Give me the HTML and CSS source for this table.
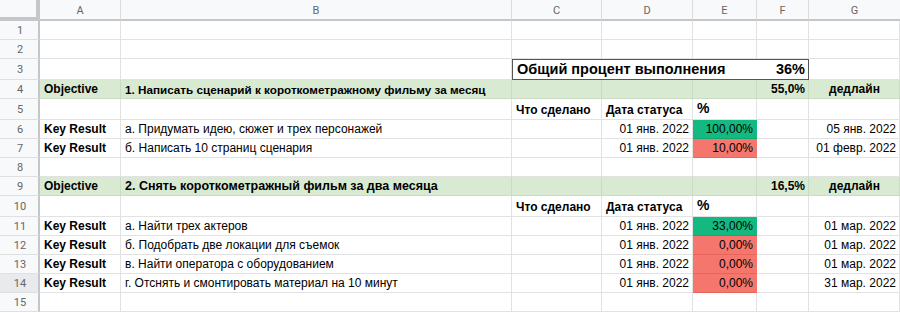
FILE: index.html
```html
<!DOCTYPE html>
<html lang="ru">
<head>
<meta charset="utf-8">
<title>OKR</title>
<link rel="stylesheet" href="styles.css">
</head>
<body>
<div class="sheet">
  <!-- header -->
  <div class="corner"></div>
  <div class="ch">A</div><div class="ch">B</div><div class="ch">C</div><div class="ch">D</div><div class="ch">E</div><div class="ch">F</div><div class="ch last">G</div>

  <!-- 1 -->
  <div class="rn">1</div><div class="c"></div><div class="c"></div><div class="c"></div><div class="c"></div><div class="c"></div><div class="c"></div><div class="c"></div>
  <!-- 2 -->
  <div class="rn">2</div><div class="c"></div><div class="c"></div><div class="c"></div><div class="c"></div><div class="c"></div><div class="c"></div><div class="c"></div>
  <!-- 3 -->
  <div class="rn">3</div><div class="c"></div><div class="c"></div>
  <div class="box"><span>Общий процент выполнения</span><span>36%</span></div>
  <div class="c"></div>
  <!-- 4 -->
  <div class="rn">4</div>
  <div class="c g b">Objective</div>
  <div class="c g b t-small">1. Написать сценарий к короткометражному фильму за месяц</div>
  <div class="c g"></div><div class="c g"></div><div class="c g"></div>
  <div class="c g b r">55,0%</div>
  <div class="c g b ctr">дедлайн</div>
  <!-- 5 -->
  <div class="rn">5</div><div class="c"></div><div class="c"></div>
  <div class="c b">Что сделано</div>
  <div class="c b">Дата статуса</div>
  <div class="c b big">%</div>
  <div class="c"></div><div class="c"></div>
  <!-- 6 -->
  <div class="rn">6</div>
  <div class="c b">Key Result</div>
  <div class="c">а. Придумать идею, сюжет и трех персонажей</div>
  <div class="c"></div>
  <div class="c r">01 янв. 2022</div>
  <div class="c r pg">100,00%</div>
  <div class="c"></div>
  <div class="c r">05 янв. 2022</div>
  <!-- 7 -->
  <div class="rn">7</div>
  <div class="c b">Key Result</div>
  <div class="c">б. Написать 10 страниц сценария</div>
  <div class="c"></div>
  <div class="c r">01 янв. 2022</div>
  <div class="c r pr">10,00%</div>
  <div class="c"></div>
  <div class="c r">01 февр. 2022</div>
  <!-- 8 -->
  <div class="rn">8</div><div class="c"></div><div class="c"></div><div class="c"></div><div class="c"></div><div class="c"></div><div class="c"></div><div class="c"></div>
  <!-- 9 -->
  <div class="rn">9</div>
  <div class="c g b">Objective</div>
  <div class="c g b t-large">2. Снять короткометражный фильм за два месяца</div>
  <div class="c g"></div><div class="c g"></div><div class="c g"></div>
  <div class="c g b r">16,5%</div>
  <div class="c g b ctr">дедлайн</div>
  <!-- 10 -->
  <div class="rn">10</div><div class="c"></div><div class="c"></div>
  <div class="c b">Что сделано</div>
  <div class="c b">Дата статуса</div>
  <div class="c b big">%</div>
  <div class="c"></div><div class="c"></div>
  <!-- 11 -->
  <div class="rn">11</div>
  <div class="c b">Key Result</div>
  <div class="c">а. Найти трех актеров</div>
  <div class="c"></div>
  <div class="c r">01 янв. 2022</div>
  <div class="c r pg">33,00%</div>
  <div class="c"></div>
  <div class="c r">01 мар. 2022</div>
  <!-- 12 -->
  <div class="rn">12</div>
  <div class="c b">Key Result</div>
  <div class="c">б. Подобрать две локации для съемок</div>
  <div class="c"></div>
  <div class="c r">01 янв. 2022</div>
  <div class="c r pr">0,00%</div>
  <div class="c"></div>
  <div class="c r">01 мар. 2022</div>
  <!-- 13 -->
  <div class="rn">13</div>
  <div class="c b">Key Result</div>
  <div class="c">в. Найти оператора с оборудованием</div>
  <div class="c"></div>
  <div class="c r">01 янв. 2022</div>
  <div class="c r pr">0,00%</div>
  <div class="c"></div>
  <div class="c r">01 мар. 2022</div>
  <!-- 14 -->
  <div class="rn sel">14</div>
  <div class="c b">Key Result</div>
  <div class="c">г. Отснять и смонтировать материал на 10 минут</div>
  <div class="c"></div>
  <div class="c r">01 янв. 2022</div>
  <div class="c r pr">0,00%</div>
  <div class="c"></div>
  <div class="c r">31 мар. 2022</div>
  <!-- 15 -->
  <div class="rn">15</div><div class="c"></div><div class="c"></div><div class="c"></div><div class="c"></div><div class="c"></div><div class="c"></div><div class="c"></div>
</div>
</body>
</html>
```

FILE: styles.css
```css
html, body {
  margin: 0;
  padding: 0;
  background: #ffffff;
}

body {
  width: 900px;
  height: 313px;
  overflow: hidden;
  font-family: "Liberation Sans", Arial, sans-serif;
  font-size: 12px;
  color: #000;
}

.sheet {
  display: grid;
  grid-template-columns: 40px 81px 391px 90px 91px 64px 52px 91px;
  grid-template-rows: 21px 19px 19px 21px 19px 21px 19px 19px 19px 19px 21px 19px 19px 19px 19px 19px;
}

.corner {
  background: #f8f9fa;
  border-right: 4px solid #c4c7c9;
  border-bottom: 4px solid #c4c7c9;
  box-sizing: border-box;
}

.ch {
  background: #f8f9fa;
  color: #666;
  font-family: Roboto, "Liberation Sans", sans-serif;
  font-size: 11px;
  display: flex;
  align-items: center;
  justify-content: center;
  border-right: 1px solid #dcdcdc;
  border-bottom: 2px solid #c4c7c9;
  box-sizing: border-box;
  padding-top: 1px;
}

.ch.last {
  border-right: none;
}

.rn {
  background: #f8f9fa;
  color: #666;
  font-family: Roboto, "Liberation Sans", sans-serif;
  font-size: 11px;
  display: flex;
  align-items: center;
  justify-content: center;
  border-right: 2px solid #c4c7c9;
  border-bottom: 1px solid #e0e0e0;
  box-sizing: border-box;
  padding-left: 2px;
}

.rn.sel {
  background: #e8eaed;
}

.c {
  box-sizing: border-box;
  border-right: 1px solid #e2e2e2;
  border-bottom: 1px solid #e2e2e2;
  padding: 0 3px 1px 4px;
  display: flex;
  align-items: flex-end;
  white-space: nowrap;
  overflow: visible;
  line-height: 15px;
  min-width: 0;
}

.g {
  background: #d9ead3;
  border-right-color: #c9dcc3;
  border-bottom-color: #c9dcc3;
}

.b {
  font-weight: bold;
}

.t-small {
  font-size: 11.7px;
}

.t-large {
  font-size: 12.5px;
}

.r {
  justify-content: flex-end;
}

.ctr {
  justify-content: center;
}

.big {
  font-size: 14px;
  line-height: 17px;
  padding-bottom: 2px;
}

.pg {
  background: #14b981;
  border-right-color: #14b981;
  border-bottom-color: #10a874;
}

.pr {
  background: #f4766d;
  border-right-color: #f4766d;
  border-bottom-color: #e8655c;
}

.box {
  grid-column: 4 / span 4;
  box-sizing: border-box;
  border: 1px solid #555;
  display: flex;
  align-items: flex-end;
  justify-content: space-between;
  padding: 0 3px 1px 4px;
  font-size: 14.5px;
  font-weight: bold;
  line-height: 17px;
}
```
